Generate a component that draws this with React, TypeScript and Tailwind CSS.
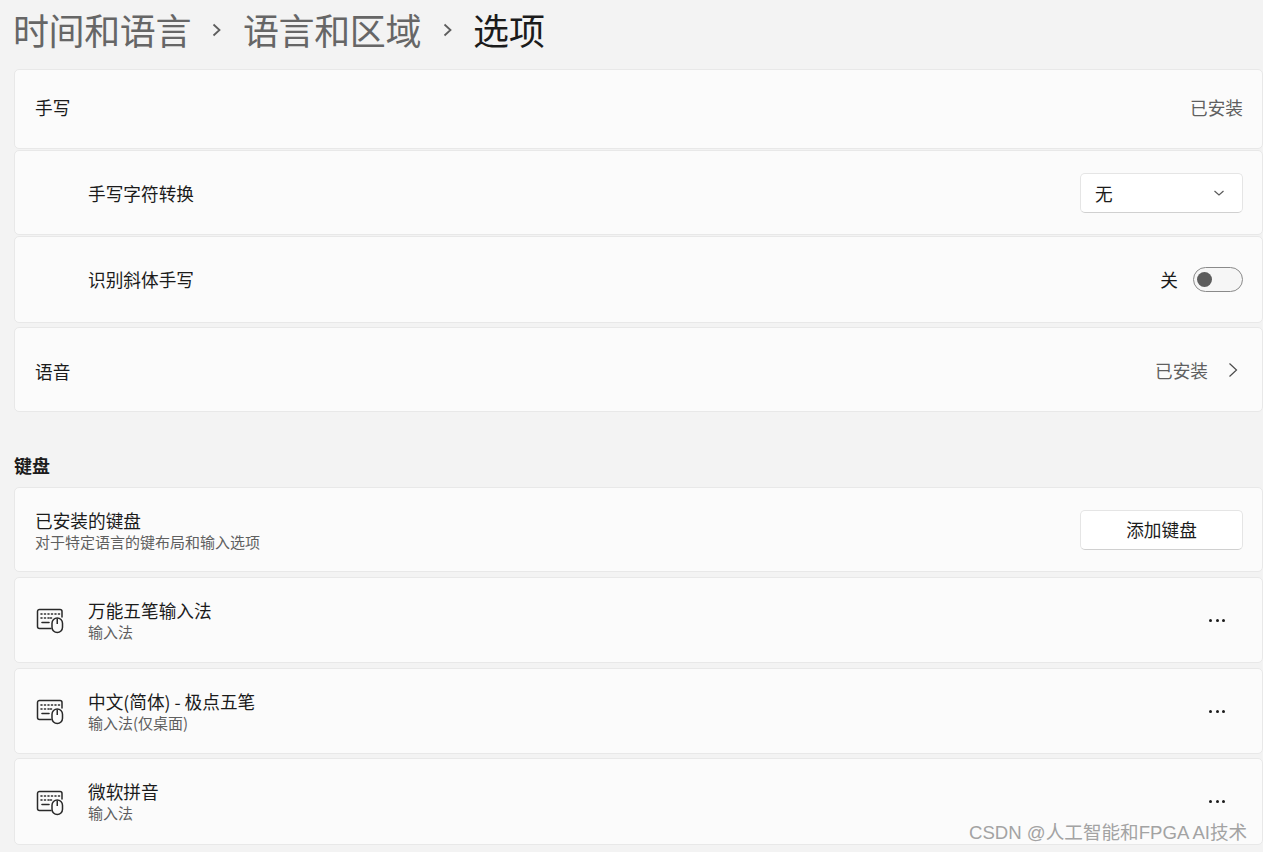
import React from "react";

function KeyboardIcon() {
  return (
    <svg width="28" height="28" viewBox="0 0 28 28" fill="none" stroke="#2a2a2a" strokeWidth="1.500" className="shrink-0 mt-[2px]">
      <path d="M15 21.500H3.500A2 2 0 0 1 1.500 19.500V4.500A2 2 0 0 1 3.500 2.500H24A2 2 0 0 1 26 4.500V10" strokeLinecap="round" />
      <rect x="16" y="11" width="10.500" height="14.500" rx="5.250" fill="#fbfbfb" />
      <path d="M21.250 11.500V17" />
      <path d="M5 7H6M8.500 7H9.500M12 7H13M15.500 7H16.500M19 7H20M22.500 7H23.500M5 11H6M8.500 11H9.500M12 11H13M15.500 11H14.500M6 15.500H13" strokeLinecap="round" strokeWidth="1.600" />
    </svg>
  );
}

function Card({ className, children }: { className: string; children: React.ReactNode }) {
  return (
    <div className={`flex items-center justify-between bg-[#fbfbfb] border border-[#e8e8e8] rounded-[5px] pr-[19px] ${className}`}>
      {children}
    </div>
  );
}

function InputRow({ title, sub, className }: { title: string; sub: string; className: string }) {
  return (
    <Card className={`pl-[20px] ${className}`}>
      <div className="flex items-center gap-[24px]">
        <div className="ml-[1px]"><KeyboardIcon /></div>
        <div className="flex flex-col">
          <span className="text-[17.67px] leading-[22px] pt-[1px] text-[#1b1b1b]">{title}</span>
          <span className="text-[15px] leading-[20px] text-[#5f5f5f]">{sub}</span>
        </div>
      </div>
      <div className="flex gap-[3.5px] mr-[18px]">
        <span className="w-[3px] h-[3px] rounded-full bg-[#1b1b1b]" />
        <span className="w-[3px] h-[3px] rounded-full bg-[#1b1b1b]" />
        <span className="w-[3px] h-[3px] rounded-full bg-[#1b1b1b]" />
      </div>
    </Card>
  );
}

export default function App() {
  return (
    <div className="relative h-[852px] w-[1263px] overflow-hidden bg-[#f3f3f3] font-['Noto_Sans_CJK_SC','Noto_Sans',sans-serif]">
      <div className="flex items-center h-[69px] pl-[13px] pb-[11px] text-[36px] leading-[50px] whitespace-nowrap">
        <span className="w-[177px] text-[#666666] tracking-[-0.4px]">时间和语言</span>
        <svg width="12" height="14" viewBox="0 0 12 14" fill="none" stroke="#5d5d5d" strokeWidth="1.800" className="ml-[20px] mr-[21px] mt-[2px]">
          <path d="M3.500 1.500L9.500 7L3.500 12.500" />
        </svg>
        <span className="w-[177px] text-[#666666] tracking-[-0.4px]">语言和区域</span>
        <svg width="12" height="14" viewBox="0 0 12 14" fill="none" stroke="#5d5d5d" strokeWidth="1.800" className="ml-[21px] mr-[20px] mt-[2px]">
          <path d="M3.500 1.500L9.500 7L3.500 12.500" />
        </svg>
        <span className="text-[#1b1b1b]">选项</span>
      </div>

      <div className="flex flex-col ml-[14px] w-[1249px]">
        <Card className="h-[80px] pl-[20px]">
          <span className="text-[17.67px] text-[#1b1b1b] mb-[2px]">手写</span>
          <span className="text-[17.67px] text-[#5f5f5f] mb-[2px]">已安装</span>
        </Card>
        <Card className="h-[85px] mt-[1px] pl-[73px]">
          <span className="text-[17.67px] text-[#1b1b1b] pt-[4px]">手写字符转换</span>
          <div className="flex items-center justify-between w-[163px] h-[40px] bg-white border border-[#e5e5e5] border-b-[#d0d0d0] rounded-[5px] pl-[14px] pr-[17px]">
            <span className="text-[17.67px] text-[#1b1b1b] pt-[4px]">无</span>
            <svg width="12" height="12" viewBox="0 0 12 12" fill="none" stroke="#5a5a5a" strokeWidth="1.200">
              <path d="M1.500 4L6 8L10.500 4" />
            </svg>
          </div>
        </Card>
        <Card className="h-[87px] mt-[1px] pl-[73px]">
          <span className="text-[17.67px] text-[#1b1b1b] pt-[2px]">识别斜体手写</span>
          <div className="flex items-center gap-[15px]">
            <span className="text-[17.67px] text-[#1b1b1b] pt-[2px]">关</span>
            <div className="flex items-center w-[50px] h-[25px] rounded-full bg-[#f6f6f6] border border-[#8a8a8a] pl-[3px]">
              <span className="w-[15px] h-[15px] rounded-full bg-[#5d5d5d]" />
            </div>
          </div>
        </Card>
        <Card className="h-[85px] mt-[4px] pl-[20px]">
          <span className="text-[17.67px] text-[#1b1b1b] pt-[6px]">语音</span>
          <div className="flex items-center gap-[19px]">
            <span className="text-[17.67px] text-[#5f5f5f] pt-[4px]">已安装</span>
            <svg width="12" height="16" viewBox="0 0 12 16" fill="none" stroke="#4a4a4a" strokeWidth="1.200" className="mr-[4px]">
              <path d="M2.500 1.500L9.500 8L2.500 14.500" />
            </svg>
          </div>
        </Card>

        <div className="mt-[41px] h-[24px] text-[18px] leading-[24px] font-bold text-[#1b1b1b] mb-[10px]">键盘</div>

        <Card className="h-[85px] pl-[20px]">
          <div className="flex flex-col">
            <span className="text-[17.67px] leading-[22px] pt-[2px] text-[#1b1b1b]">已安装的键盘</span>
            <span className="text-[15px] leading-[20px] text-[#5f5f5f]">对于特定语言的键布局和输入选项</span>
          </div>
          <button className="w-[163px] h-[40px] pt-[2px] bg-white border border-[#e5e5e5] border-b-[#d0d0d0] rounded-[5px] text-[17.67px] text-[#1b1b1b]">
            添加键盘
          </button>
        </Card>
        <InputRow className="h-[86px] mt-[5px]" title="万能五笔输入法" sub="输入法" />
        <InputRow className="h-[86px] mt-[5px]" title="中文(简体) - 极点五笔" sub="输入法(仅桌面)" />
        <InputRow className="h-[87px] mt-[4px]" title="微软拼音" sub="输入法" />
      </div>

      <div className="absolute left-[969px] top-[819px] text-[18.6px] leading-[27px] whitespace-nowrap text-[#a3a3a3] font-['Liberation_Sans','Noto_Sans_CJK_SC',sans-serif]">
        CSDN @人工智能和FPGA AI技术
      </div>
    </div>
  );
}
